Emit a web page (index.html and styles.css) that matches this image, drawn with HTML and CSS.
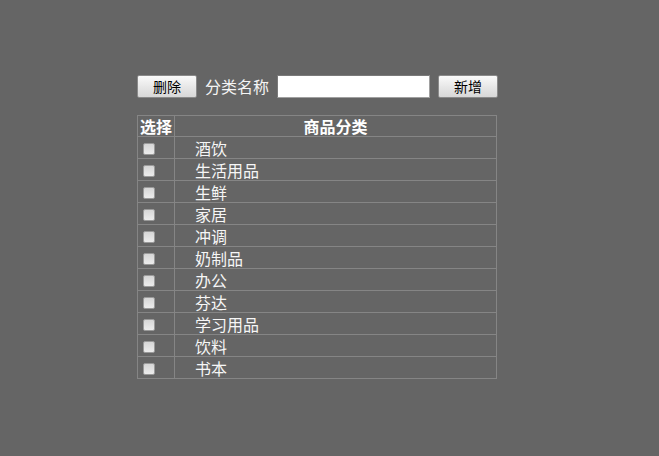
FILE: index.html
```html
<!DOCTYPE html>
<html lang="zh">
<head>
<meta charset="utf-8">
<link rel="stylesheet" href="styles.css">
</head>
<body>
<div class="wrap">
  <div class="toolbar">
    <button class="btn">删除</button>
    <span class="label">分类名称</span>
    <input class="field" type="text">
    <button class="btn">新增</button>
  </div>
  <table class="grid">
    <colgroup><col class="col1"><col class="col2"></colgroup>
    <thead>
      <tr><th class="c1">选择</th><th class="c2">商品分类</th></tr>
    </thead>
    <tbody>
      <tr><td class="c1"><span class="cb"></span></td><td class="c2">酒饮</td></tr>
      <tr><td class="c1"><span class="cb"></span></td><td class="c2">生活用品</td></tr>
      <tr><td class="c1"><span class="cb"></span></td><td class="c2">生鲜</td></tr>
      <tr><td class="c1"><span class="cb"></span></td><td class="c2">家居</td></tr>
      <tr><td class="c1"><span class="cb"></span></td><td class="c2">冲调</td></tr>
      <tr><td class="c1"><span class="cb"></span></td><td class="c2">奶制品</td></tr>
      <tr><td class="c1"><span class="cb"></span></td><td class="c2">办公</td></tr>
      <tr><td class="c1"><span class="cb"></span></td><td class="c2">芬达</td></tr>
      <tr><td class="c1"><span class="cb"></span></td><td class="c2">学习用品</td></tr>
      <tr><td class="c1"><span class="cb"></span></td><td class="c2">饮料</td></tr>
      <tr><td class="c1"><span class="cb"></span></td><td class="c2">书本</td></tr>
    </tbody>
  </table>
</div>
</body>
</html>
```
FILE: styles.css
```css
html, body {
  margin: 0;
  padding: 0;
  background: #656565;
  height: 100%;
}
body {
  font-family: "Noto Sans CJK SC", "Noto Sans", sans-serif;
  color: #fff;
}
.wrap {
  padding: 74px 0 0 137px;
  width: 360px;
}
.toolbar {
  display: flex;
  align-items: center;
  height: 24px;
  white-space: nowrap;
}
.btn {
  flex-shrink: 0;
  box-sizing: border-box;
  width: 60px;
  height: 23px;
  padding: 0;
  border: 1px solid #8a8a8a;
  border-radius: 2px;
  background: linear-gradient(#fafafa, #e6e6e6 55%, #d8d8d8);
  font-family: "Noto Sans CJK SC", sans-serif;
  font-size: 14px;
  line-height: 20px;
  color: #000;
}
.label {
  flex-shrink: 0;
  margin: 0 8px 0 8px;
  font-size: 16px;
  line-height: 20px;
  color: #f4f4f4;
}
.field {
  flex-shrink: 0;
  box-sizing: border-box;
  width: 153px;
  height: 23px;
  margin-right: 8px;
  border: 1px solid #a0a0a0;
  border-top-color: #7a7a7a;
  border-left-color: #7a7a7a;
  background: #fff;
  padding: 0;
}
.grid {
  margin-top: 17px;
  width: 360px;
  border-collapse: collapse;
  table-layout: fixed;
  border: 1px solid #888;
}
.col1 { width: 37px; }
.grid th, .grid td {
  border: 1px solid #858585;
  padding: 0;
  height: 21px;
  font-size: 16px;
  line-height: 20px;
  white-space: nowrap;
  overflow: hidden;
}
.grid th {
  font-weight: bold;
  height: 20px;
}
.grid th.c1, .grid th.c2 {
  text-align: center;
}
.grid td.c2 {
  text-align: left;
  padding-left: 20px;
  color: #f6f6f6;
}
.grid td.c1 {
  text-align: left;
  padding-left: 5px;
}
.cb {
  display: inline-block;
  vertical-align: middle;
  box-sizing: border-box;
  width: 12px;
  height: 12px;
  border: 1px solid #9a9a9a;
  border-radius: 2px;
  background: linear-gradient(#d6d6d6, #ececec);
  margin-top: -2px;
}
```
